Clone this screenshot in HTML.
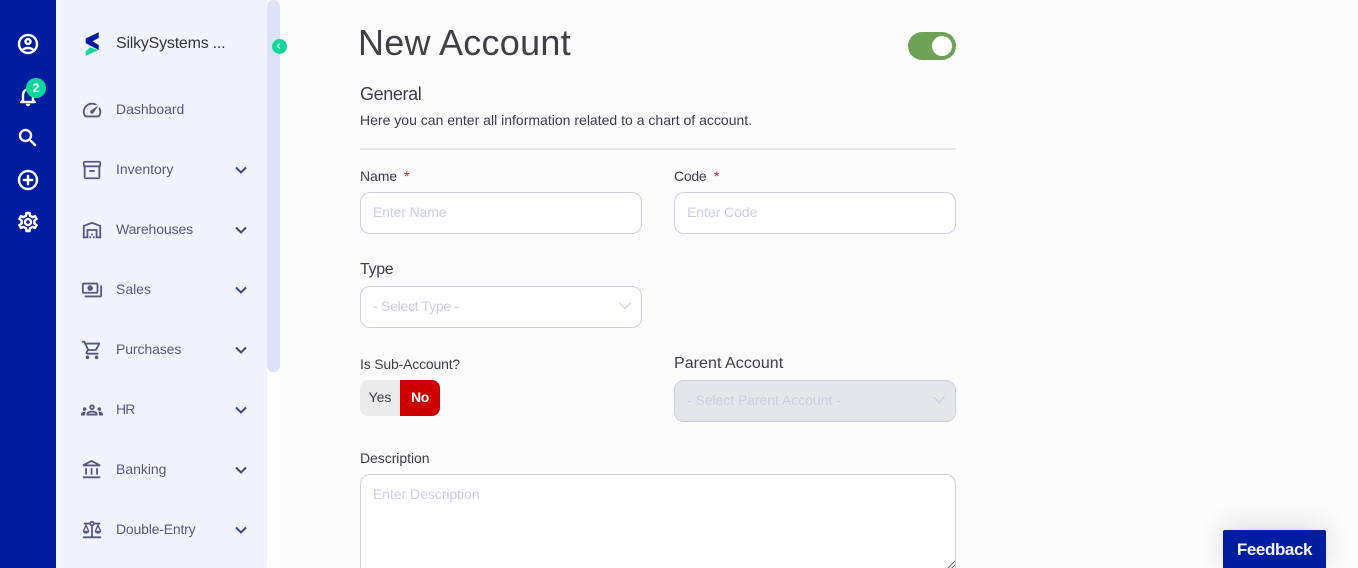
<!DOCTYPE html>
<html lang="en"><head><meta charset="utf-8"><title>New Account</title>
<style>
html,body{margin:0;padding:0;width:1358px;height:568px;overflow:hidden;background:#fcfcfd;font-family:"Liberation Sans",sans-serif;color:#3f3f46}
#p{position:absolute;left:0;top:0;width:1358px;height:568px;overflow:hidden;background:#fcfcfd}
#p div,#p span,#p svg{position:absolute;box-sizing:border-box}
.t{white-space:nowrap;line-height:20px}
.nav{font-size:14px;color:#55597f;left:116px;letter-spacing:-.02px}
.lab{font-size:14px;color:#3c3c48;letter-spacing:-.05px}
.lab2{font-size:16px;color:#3c3c48;letter-spacing:-.1px}
.in{background:#fff;border:1px solid #cfcfe2;border-radius:10px}
.ph{font-size:14px;color:#cdcee0;letter-spacing:-.05px}
.ic{fill:#55597f}
.rail{fill:#fff;stroke:#fff;stroke-width:.45}
.ch{fill:none;stroke:#3f4a85;stroke-width:2;left:234px;width:14px;height:10px}
.sel{fill:none;stroke:#cdcee0;stroke-width:1.3;width:14px;height:10px}
.req{color:#c9252d}
</style></head><body><div id="p">
<div style="left:0;top:0;width:56px;height:568px;background:#001c9f"></div>
<div style="left:56px;top:0;width:211px;height:568px;background:#f1f4fc"></div>
<div style="left:267px;top:0;width:13px;height:568px;background:#fdfdfe;border-radius:7px"></div>
<div style="left:267px;top:0;width:13px;height:372px;background:#dde2f8;border-radius:7px"></div>

<svg class="rail" style="left:16px;top:32px" width="24" height="24" viewBox="0 0 24 24"><path d="M12 2C6.48 2 2 6.48 2 12s4.48 10 10 10 10-4.48 10-10S17.52 2 12 2zM7.35 18.5C8.66 17.56 10.26 17 12 17s3.34.56 4.65 1.5C15.34 19.44 13.74 20 12 20s-3.34-.56-4.65-1.5zm10.79-1.38C16.45 15.8 14.32 15 12 15s-4.45.8-6.14 2.12C4.7 15.73 4 13.95 4 12c0-4.42 3.58-8 8-8s8 3.58 8 8c0 1.95-.7 3.73-1.86 5.12zM12 6c-1.93 0-3.5 1.57-3.5 3.5S10.07 13 12 13s3.5-1.57 3.5-3.5S13.93 6 12 6zm0 5c-.83 0-1.5-.67-1.5-1.5S11.17 8 12 8s1.5.67 1.5 1.5S12.83 11 12 11z"/></svg>
<svg class="rail" style="left:16px;top:84px" width="24" height="24" viewBox="0 0 24 24"><path d="M12 22c1.1 0 2-.9 2-2h-4c0 1.1.9 2 2 2zm6-6v-5c0-3.07-1.63-5.64-4.5-6.32V4c0-.83-.67-1.5-1.5-1.5s-1.5.67-1.5 1.5v.68C7.64 5.36 6 7.92 6 11v5l-2 2v1h16v-1l-2-2zm-2 1H8v-6c0-2.48 1.51-4.5 4-4.5s4 2.02 4 4.5v6z"/></svg>
<div style="left:26px;top:78px;width:20px;height:20px;border-radius:50%;background:#14d69b;color:#fff;font-size:12px;font-weight:bold;text-align:center;line-height:20px">2</div>
<svg class="rail" style="left:16px;top:126px" width="24" height="24" viewBox="0 0 24 24"><path d="M15.5 14h-.79l-.28-.27C15.41 12.59 16 11.11 16 9.5 16 5.91 13.09 3 9.5 3S3 5.91 3 9.5 5.91 16 9.5 16c1.61 0 3.09-.59 4.23-1.57l.27.28v.79l5 4.99L20.49 19l-4.99-5zm-6 0C7.01 14 5 11.99 5 9.5S7.01 5 9.5 5 14 7.01 14 9.5 11.99 14 9.5 14z"/></svg>
<svg class="rail" style="left:16px;top:168px" width="24" height="24" viewBox="0 0 24 24"><path d="M13 7h-2v4H7v2h4v4h2v-4h4v-2h-4V7zm-1-5C6.48 2 2 6.48 2 12s4.48 10 10 10 10-4.48 10-10S17.52 2 12 2zm0 18c-4.41 0-8-3.59-8-8s3.59-8 8-8 8 3.59 8 8-3.59 8-8 8z"/></svg>
<svg class="rail" style="left:16px;top:210px" width="24" height="24" viewBox="0 0 24 24"><path d="M19.43 12.98c.04-.32.07-.64.07-.98 0-.34-.03-.66-.07-.98l2.11-1.65c.19-.15.24-.42.12-.64l-2-3.46c-.09-.16-.26-.25-.44-.25-.06 0-.12.01-.17.03l-2.49 1c-.52-.4-1.08-.73-1.69-.98l-.38-2.65C14.46 2.18 14.25 2 14 2h-4c-.25 0-.46.18-.49.42l-.38 2.65c-.61.25-1.17.59-1.69.98l-2.49-1c-.06-.02-.12-.03-.18-.03-.17 0-.34.09-.43.25l-2 3.46c-.13.22-.07.49.12.64l2.11 1.65c-.04.32-.07.65-.07.98 0 .33.03.66.07.98l-2.11 1.65c-.19.15-.24.42-.12.64l2 3.46c.09.16.26.25.44.25.06 0 .12-.01.17-.03l2.49-1c.52.4 1.08.73 1.69.98l.38 2.65c.03.24.24.42.49.42h4c.25 0 .46-.18.49-.42l.38-2.65c.61-.25 1.17-.59 1.69-.98l2.49 1c.06.02.12.03.18.03.17 0 .34-.09.43-.25l2-3.46c.12-.22.07-.49-.12-.64l-2.11-1.65zm-1.98-1.71c.04.31.05.52.05.73 0 .21-.02.43-.05.73l-.14 1.13.89.7 1.08.84-.7 1.21-1.27-.51-1.04-.42-.9.68c-.43.32-.84.56-1.25.73l-1.06.43-.16 1.13-.2 1.35h-1.4l-.19-1.35-.16-1.13-1.06-.43c-.43-.18-.83-.41-1.23-.71l-.91-.7-1.06.43-1.27.51-.7-1.21 1.08-.84.89-.7-.14-1.13c-.03-.31-.05-.54-.05-.74s.02-.43.05-.73l.14-1.13-.89-.7-1.08-.84.7-1.21 1.27.51 1.04.42.9-.68c.43-.32.84-.56 1.25-.73l1.06-.43.16-1.13.2-1.35h1.39l.19 1.35.16 1.13 1.06.43c.43.18.83.41 1.23.71l.91.7 1.06-.43 1.27-.51.7 1.21-1.07.85-.89.7.14 1.13zM12 8c-2.21 0-4 1.79-4 4s1.79 4 4 4 4-1.79 4-4-1.79-4-4-4zm0 6c-1.1 0-2-.9-2-2s.9-2 2-2 2 .9 2 2-.9 2-2 2z"/></svg>

<svg style="left:80px;top:28px" width="24" height="32" viewBox="0 0 24 32"><path d="M18.7 4.300V10L12.500 13.300 18.700 17V22L5.700 15.300V10.500z" fill="#001c9f"/><path d="M18.700 22L5.700 27.700V23.500L10 19.500z" fill="#14d69b"/></svg>
<div class="t" style="left:116px;top:34px;font-size:16px;color:#33343f;letter-spacing:-.22px">SilkySystems ...</div>
<div style="left:272px;top:39px;width:15px;height:15px;border-radius:50%;background:#14d69b"></div>
<svg style="left:275px;top:42px" width="8" height="8" viewBox="0 0 8 8"><path d="M5 1.500L2.500 4 5 6.500" fill="none" stroke="#c9f5e6" stroke-width="1.300"/></svg>

<svg class="ic" style="left:81px;top:99px" width="22" height="22" viewBox="0 0 24 24"><path d="M20.38 8.57l-1.23 1.85a8 8 0 0 1-.22 7.58H5.07A8 8 0 0 1 15.58 6.85l1.85-1.23A10 10 0 0 0 3.35 19a2 2 0 0 0 1.72 1h13.85a2 2 0 0 0 1.74-1 10 10 0 0 0-.27-10.44zm-9.79 6.84a2 2 0 0 0 2.83 0l5.66-8.49-8.49 5.660a2 2 0 0 0 0 2.830z"/></svg>
<div class="t nav" style="top:99px">Dashboard</div>

<svg class="ic" style="left:81px;top:159px" width="22" height="22" viewBox="0 0 24 24"><path d="M20 2H4c-1 0-2 .9-2 2v3.010c0 .72.43 1.340 1 1.690V20c0 1.100 1.100 2 2 2h14c.9 0 2-.9 2-2V8.700c.57-.35 1-.97 1-1.690V4c0-1.100-1-2-2-2zm-1 18H5V9h14v11zm1-13H4V4h16v3zM9 12h6v2H9z"/></svg>
<div class="t nav" style="top:159px">Inventory</div>
<svg class="ch" style="top:165px" viewBox="0 0 14 10"><path d="M2 2.500l5 5 5-5"/></svg>

<svg class="ic" style="left:81px;top:219px" width="22" height="22" viewBox="0 0 24 24"><path fill-rule="evenodd" d="M20 8.350V19h-2v-8H6v8H4V8.350l8-3.200zM22 21V7L12 3 2 7v14h6v-8h8v8h6zM11 19H9v2h2zM13 16h-2v2h2zM15 19h-2v2h2z"/></svg>
<div class="t nav" style="top:219px;letter-spacing:-.1px">Warehouses</div>
<svg class="ch" style="top:225px" viewBox="0 0 14 10"><path d="M2 2.500l5 5 5-5"/></svg>

<svg class="ic" style="left:81px;top:279px" width="22" height="22" viewBox="0 0 24 24"><path d="M19 14V6c0-1.100-.9-2-2-2H3c-1.100 0-2 .9-2 2v8c0 1.100.9 2 2 2h14c1.100 0 2-.9 2-2zm-2 0H3V6h14v8zm-7-7c-1.660 0-3 1.340-3 3s1.340 3 3 3 3-1.340 3-3-1.340-3-3-3zm13 0v11c0 1.100-.9 2-2 2H4v-2h17V7h2z"/></svg>
<div class="t nav" style="top:279px">Sales</div>
<svg class="ch" style="top:285px" viewBox="0 0 14 10"><path d="M2 2.500l5 5 5-5"/></svg>

<svg class="ic" style="left:81px;top:339px" width="22" height="22" viewBox="0 0 24 24"><path d="M15.550 13c.75 0 1.410-.41 1.750-1.030l3.580-6.490c.37-.66-.11-1.480-.87-1.480H5.210l-.94-2H1v2h2l3.600 7.590-1.350 2.440C4.520 15.370 5.480 17 7 17h12v-2H7l1.100-2h7.450zM6.160 6h12.150l-2.760 5H8.530L6.160 6zM7 18c-1.100 0-1.990.9-1.990 2S5.900 22 7 22s2-.9 2-2-.9-2-2-2zm10 0c-1.100 0-1.990.9-1.990 2s.89 2 1.990 2 2-.9 2-2-.9-2-2-2z"/></svg>
<div class="t nav" style="top:339px;letter-spacing:-.1px">Purchases</div>
<svg class="ch" style="top:345px" viewBox="0 0 14 10"><path d="M2 2.500l5 5 5-5"/></svg>

<svg class="ic" style="left:81px;top:399px" width="22" height="22" viewBox="0 0 24 24"><path d="M4 13c1.100 0 2-.9 2-2s-.9-2-2-2-2 .9-2 2 .9 2 2 2zm1.130 1.100c-.37-.06-.74-.1-1.130-.1-.99 0-1.930.21-2.780.58C.48 14.900 0 15.620 0 16.430V18h4.500v-1.610c0-.83.23-1.610.63-2.290zM20 13c1.100 0 2-.9 2-2s-.9-2-2-2-2 .9-2 2 .9 2 2 2zm4 3.430c0-.81-.48-1.530-1.220-1.850-.85-.37-1.790-.58-2.780-.58-.39 0-.76.04-1.130.1.4.68.63 1.460.63 2.290V18H24v-1.570zm-7.760-2.780c-1.170-.52-2.610-.9-4.240-.9-1.630 0-3.070.39-4.240.9C6.680 14.130 6 15.210 6 16.390V18h12v-1.610c0-1.180-.68-2.260-1.760-2.740zM8.070 16c.09-.23.13-.39.91-.69.97-.38 1.990-.56 3.020-.56s2.050.18 3.020.56c.77.3.81.46.91.69H8.070zM12 8c.55 0 1 .45 1 1s-.45 1-1 1-1-.45-1-1 .45-1 1-1m0-2c-1.660 0-3 1.340-3 3s1.340 3 3 3 3-1.340 3-3-1.340-3-3-3z"/></svg>
<div class="t nav" style="top:399px;letter-spacing:-.8px">HR</div>
<svg class="ch" style="top:405px" viewBox="0 0 14 10"><path d="M2 2.500l5 5 5-5"/></svg>

<svg class="ic" style="left:81px;top:459px" width="22" height="22" viewBox="0 0 24 24"><path d="M6.500 10h-2v7h2v-7zm6 0h-2v7h2v-7zm8.500 9H2v2h19v-2zm-2.500-9h-2v7h2v-7zm-7-6.740L16.710 6H6.290l5.210-2.740m0-2.260L2 6v2h19V6l-9.500-5z"/></svg>
<div class="t nav" style="top:459px">Banking</div>
<svg class="ch" style="top:465px" viewBox="0 0 14 10"><path d="M2 2.500l5 5 5-5"/></svg>

<svg class="ic" style="left:81px;top:519px" width="22" height="22" viewBox="0 0 24 24"><path d="M13 7.830c.85-.3 1.530-.98 1.830-1.830H18l-3 7c0 1.660 1.570 3 3.500 3s3.500-1.340 3.500-3l-3-7h2V4h-6.170c-.41-1.170-1.520-2-2.830-2s-2.420.83-2.830 2H3v2h2l-3 7c0 1.660 1.570 3 3.500 3S9 14.660 9 13L6 6h3.170c.3.85.98 1.530 1.830 1.830V19H2v2h20v-2h-9V7.830zM20.370 13h-3.740l1.870-4.360L20.370 13zm-13 0H3.630L5.500 8.640 7.370 13zM12 6c-.55 0-1-.45-1-1s.45-1 1-1 1 .45 1 1-.45 1-1 1z"/></svg>
<div class="t nav" style="top:519px;letter-spacing:-.19px">Double-Entry</div>
<svg class="ch" style="top:525px" viewBox="0 0 14 10"><path d="M2 2.500l5 5 5-5"/></svg>

<div class="t" style="left:358px;top:22px;font-size:36px;line-height:42px;color:#3f3f46;letter-spacing:.25px">New Account</div>
<div style="left:908px;top:32px;width:48px;height:28px;border-radius:14px;background:#6ea153"></div>
<div style="left:932px;top:36px;width:20px;height:20px;border-radius:50%;background:#fff"></div>

<div class="t lab2" style="left:360px;top:84px;font-size:18px;letter-spacing:-.38px">General</div>
<div class="t lab" style="left:360px;top:110px;letter-spacing:.01px">Here you can enter all information related to a chart of account.</div>
<div style="left:360px;top:148px;width:596px;height:2px;background:#e5e5ea"></div>

<div class="t lab" style="left:360px;top:166px">Name</div><div class="t lab req" style="left:404px;top:166px">*</div>
<div class="in" style="left:360px;top:192px;width:282px;height:42px"></div>
<div class="t ph" style="left:373px;top:202px;letter-spacing:-.13px">Enter Name</div>

<div class="t lab" style="left:674px;top:166px;letter-spacing:-.25px">Code</div><div class="t lab req" style="left:714px;top:166px">*</div>
<div class="in" style="left:674px;top:192px;width:282px;height:42px"></div>
<div class="t ph" style="left:687px;top:202px">Enter Code</div>

<div class="t lab2" style="left:360px;top:260px;letter-spacing:-.35px">Type</div>
<div class="in" style="left:360px;top:286px;width:282px;height:42px"></div>
<div class="t ph" style="left:373px;top:296px;letter-spacing:-.27px">- Select Type -</div>
<svg class="sel" style="left:618px;top:301px" viewBox="0 0 14 10"><path d="M1.500 2l5.500 5.500L12.500 2"/></svg>

<div class="t lab" style="left:360px;top:354px;letter-spacing:-.18px">Is Sub-Account?</div>
<div style="left:360px;top:380px;width:40px;height:36px;background:#ececec;border-radius:8px 0 0 8px"></div>
<div style="left:400px;top:380px;width:40px;height:36px;background:#cd0000;border-radius:0 8px 8px 0"></div>
<div class="t" style="left:360px;top:387px;width:40px;text-align:center;font-size:14px;color:#3c3c48">Yes</div>
<div class="t" style="left:400px;top:387px;width:40px;text-align:center;font-size:14px;color:#fff;font-weight:bold;letter-spacing:-.3px">No</div>

<div class="t lab2" style="left:674px;top:354px;letter-spacing:.05px">Parent Account</div>
<div class="in" style="left:674px;top:380px;width:282px;height:42px;background:#e5e6ea"></div>
<div class="t ph" style="left:687px;top:390px">- Select Parent Account -</div>
<svg class="sel" style="left:932px;top:395px" viewBox="0 0 14 10"><path d="M1.500 2l5.500 5.500L12.500 2"/></svg>

<div class="t lab" style="left:360px;top:448px">Description</div>
<div class="in" style="left:360px;top:474px;width:596px;height:110px"></div>
<div class="t ph" style="left:373px;top:484px">Enter Description</div>
<svg style="left:945px;top:559px" width="11" height="11" viewBox="0 0 11 11"><path d="M2 10L10 2M6 10L10 6" stroke="#666" stroke-width="1" fill="none"/></svg>

<div class="t" style="left:1223px;top:530px;width:103px;height:40px;background:#001c9f;border-radius:2px 2px 0 0;box-shadow:0 -4px 26px rgba(0,0,0,.13);color:#f4f5fb;font-size:17px;font-weight:bold;text-align:center;line-height:39px;letter-spacing:-.4px">Feedback</div>
</div></body></html>
